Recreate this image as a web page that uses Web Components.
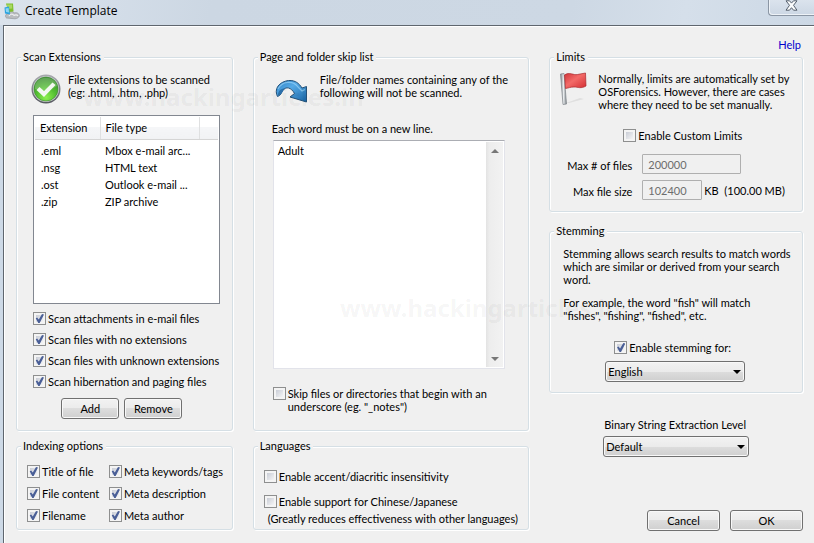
<!DOCTYPE html>
<html lang="en">
<head>
<meta charset="utf-8">
<title>Create Template</title>
<style>
  html { height: 100%; }
  body { margin: 0; min-height: 100%; display: flex; background: #f0f0f0; color: #000;
    font: 11px/13px Lato, "DejaVu Sans Condensed", sans-serif; }
  template-dialog { flex: 1; }
</style>
</head>
<body>
<template-dialog></template-dialog>

<script>
const define = (name, html, setup) => {
  const template = document.createElement('template');
  template.innerHTML = html;
  customElements.define(name, class extends HTMLElement {
    constructor() {
      super();
      this.attachShadow({ mode: 'open' }).append(template.content.cloneNode(true));
    }
    connectedCallback() { if (setup) setup(this, this.shadowRoot); }
  });
};

define('title-bar', `
<style>
  :host { display: flex; align-items: flex-start; height: 25px; box-sizing: border-box; padding-left: 3px;
    background: linear-gradient(100deg, #dbe3ec 0, #d3dde8 14%, #ccd7e3 26%, #cdd8e4 70%, #d5dfea 84%, #ccd8e5 100%); }
  svg { display: block; }
  .logo { margin-top: 3px; }
  h1 { flex: 1; margin: 0; padding: 3px 0 0 5px; font: 12px/16px "Open Sans", "Noto Sans", sans-serif; }
  button { width: 46px; height: 16px; padding: 0; display: grid; place-items: start center; box-sizing: border-box;
    border: 1px solid #8b96a4; border-top: 0; border-right: 0; border-radius: 0 0 0 4px;
    background: linear-gradient(#dbe3ed, #ccd7e4); box-shadow: inset 1px -1px #edf2f7; }
</style>
<svg class="logo" width="17" height="17" viewBox="0 0 17 17" aria-hidden="true">
  <path d="M3.500 15c-1.500-1-1.500-4 1.500-4.500 2-2.500 5-2.500 6-.5 3-1 5.500.5 5.300 3-.3 1.500-2.500 2.800-4.300 2.800z" fill="#b9bcbf" stroke="#8c9195" stroke-width=".6"/>
  <path d="M6 13c1-2 3.500-2.500 5-.5 1-.8 3-1 4 .3" fill="none" stroke="#eceeef" stroke-width="1.200"/>
  <path d="M3 .5h7l.5 8-5 .5z" fill="#7fbf2f"/><path d="M4 1.500h5l.3 4-4.800.5z" fill="#a9d862"/>
  <path d="M1.500 4.500l4.500-1 1 8-5-1z" fill="#2ba3df"/><path d="M2.500 5.500l3-.6.600 4.600-3-.6z" fill="#8ed6f5"/>
</svg>
<h1><slot></slot></h1>
<button type="button" aria-label="Close">
  <svg width="13" height="11" viewBox="0 0 13 11"><path d="M1 .8h3.500l2 2.300 2-2.300H12L8.500 5.300 12 10.200H8.500l-2-2.500-2 2.500H1l3.500-4.900z" fill="#fbfcfd" stroke="#555f6c"/></svg>
</button>`);

define('group-box', `
<style>
  :host { display: block; }
  fieldset { margin: 0; padding: 0; min-width: 0; height: 100%; box-sizing: border-box;
    border: 1px solid #d5dfe5; border-radius: 3px; box-shadow: 1px 1px #fff, inset 1px 1px #fff; }
  legend { margin-left: 4px; padding: 0 3px 0 2px; line-height: 14px; background: #f0f0f0; }
  .content { display: flex; flex-direction: column; padding: var(--pad, 0); }
</style>
<fieldset><legend></legend><div class="content"><slot></slot></div></fieldset>`,
(host, root) => { root.querySelector('legend').textContent = host.getAttribute('heading'); });

define('check-box', `
<style>
  :host { display: block; }
  label { display: flex; align-items: flex-start; gap: 2px; white-space: nowrap; }
  input { appearance: none; flex: none; margin: 0; width: 13px; height: 13px; box-sizing: border-box;
    border: 1px solid #8e8f8f; background: linear-gradient(135deg, #c9cdd6, #f4f4f5) content-box, #f4f4f4; padding: 2px; 
    display: grid; }
  input::before { content: ""; width: 9px; height: 9px; margin: -1px; }
  input:checked::before { background: #4a5f97;
    clip-path: polygon(8% 48%, 24% 38%, 42% 60%, 78% 0, 100% 6%, 52% 100%, 36% 100%); }
</style>
<label><input type="checkbox"><span><slot></slot></span></label>`,
(host, root) => { root.querySelector('input').checked = host.hasAttribute('checked'); });

define('push-button', `
<style>
  :host { display: block; width: 58px; }
  button { display: block; width: 100%; height: 21px; padding: 0; font: inherit; color: inherit; border: 1px solid #707070; border-radius: 3px;
    background: linear-gradient(#f2f2f2, #ebebeb 50%, #dddddd 50%, #cfcfcf); box-shadow: inset 0 0 0 1px #f8f8f8; }
</style>
<button type="button"><slot></slot></button>`);

define('drop-down', `
<style>
  :host { display: block; }
  label { display: block; line-height: 14px; margin-bottom: 4px; padding-left: 1px; white-space: nowrap; }
  label:empty { display: none; }
  .box { display: grid; align-items: center; }
  select, svg { grid-area: 1 / 1; }
  select { appearance: none; width: 100%; height: 21px; margin: 0; padding: 0 20px 0 2px; font: inherit; color: inherit;
    border: 1px solid #707070; border-radius: 3px; background: linear-gradient(#f2f2f2, #ebebeb 50%, #dddddd 50%, #cfcfcf); box-shadow: inset 0 0 0 1px #f8f8f8; }
  svg { justify-self: end; margin-right: 4px; pointer-events: none; }
</style>
<label for="choice"></label>
<div class="box"><select id="choice"></select>
<svg width="8" height="4" viewBox="0 0 8 4" aria-hidden="true"><path d="M0 0h8L4 4z"/></svg></div>`,
(host, root) => {
  const select = root.querySelector('select');
  root.querySelector('label').textContent = host.getAttribute('label') || '';
  select.replaceChildren(new Option(host.getAttribute('value')));
  if (!host.hasAttribute('label')) select.setAttribute('aria-label', host.getAttribute('name'));
});

define('limit-field', `
<style>
  :host { display: block; }
  div { display: grid; grid-template-columns: 74px 1fr; column-gap: 10px; align-items: center; white-space: nowrap; }
  label { text-align: right; padding-top: 3px; }
  span { display: flex; align-items: center; gap: 2px; }
  input { width: var(--field, 60px); height: 20px; box-sizing: border-box; margin: 0; padding: 0 5px; font: inherit; color: #6d6d6d;
    border: 1px solid #afafaf; border-radius: 1px; background: #f0f0f0; }
</style>
<div><label for="amount"></label><span><input id="amount" disabled><slot></slot></span></div>`,
(host, root) => {
  root.querySelector('label').textContent = host.getAttribute('label');
  root.querySelector('input').value = host.getAttribute('value');
});

define('word-list', `
<style>
  :host { display: block; }
  label { display: block; margin: 0 0 5px -1px; }
  .box { display: flex; height: 229px; box-sizing: border-box; background: #fff; border: 1px solid #e2e3ea; border-top-color: #abadb3; }
  textarea { flex: 1; min-width: 0; resize: none; margin: 0; padding: 3px 4px; overflow: hidden;
    font: inherit; color: inherit; background: none; border: 0; outline: 0; }
  .rail { width: 17px; margin: 1px; box-sizing: border-box; padding: 7px 0 6px; display: flex; flex-direction: column; justify-content: space-between; align-items: center;
    background: linear-gradient(90deg, #e3e3e3, #ededed 20%, #f2f2f2); }
  svg { display: block; }
</style>
<label for="words">Each word must be on a new line.</label>
<div class="box"><textarea id="words" spellcheck="false">Adult</textarea>
<div class="rail" aria-hidden="true">
  <svg width="8" height="4" viewBox="0 0 8 4"><path d="M0 4h8L4 0z" fill="#777"/></svg>
  <svg width="8" height="4" viewBox="0 0 8 4"><path d="M0 0h8L4 4z" fill="#777"/></svg>
</div></div>`);

define('extension-table', `
<style>
  :host { display: block; height: 189px; box-sizing: border-box; border: 1px solid #828790; background: #fff; padding: 1px; }
  table { width: 100%; border-collapse: collapse; table-layout: fixed; }
  th, td { padding: 0 0 0 5px; font-weight: normal; text-align: left; white-space: nowrap; }
  th { height: 22px; box-sizing: border-box; border-right: 1px solid #dfe0e1; border-bottom: 1px solid #d5d5d5;
    background: linear-gradient(#fff 45%, #f5f6f8 45%, #f1f2f4); }
  th:last-child { border-right: 0; }
  td { height: 17px; }
  td:first-child { padding-left: 6px; }
  tbody::before { content: ""; display: block; height: 2px; }
</style>
<table>
  <colgroup><col style="width:65px"><col><col style="width:18px"></colgroup>
  <thead><tr><th>Extension</th><th>File type</th><th></th></tr></thead>
  <tbody></tbody>
</table>`,
(host, root) => {
  const body = root.querySelector('tbody');
  for (const row of [['.eml', 'Mbox e-mail arc...'], ['.nsg', 'HTML text'], ['.ost', 'Outlook e-mail ...'], ['.zip', 'ZIP archive']]) {
    const tr = body.insertRow();
    for (const text of row) tr.insertCell().textContent = text;
  }
});

define('picture-note', `
<style>
  :host { display: flex; align-items: flex-start; }
  ::slotted(svg) { display: block; flex: none; }
  p { margin: 0; white-space: nowrap; }
</style>
<slot name="icon"></slot><p><slot></slot></p>`);

define('water-mark', `
<style>
  :host { position: absolute; pointer-events: none; white-space: nowrap; color: rgba(0, 0, 0, .055);
    font: bold 24px/28px "Noto Sans", "Open Sans", sans-serif; }
</style><slot></slot>`);

define('template-dialog', `
<style>
  :host { display: flex; flex-direction: column; position: relative; background: #cdd9e6; }
  main { flex: 1; display: flex; flex-direction: column; margin-left: 3px; padding: 12px 11px 12px 12px; border: solid #5f666e; border-width: 1px 0 0 1px;
    background: #f0f0f0; box-shadow: inset 1px 1px #fff; }
  nav { text-align: right; padding-right: 2px; height: 12px; }
  a { color: #00c; text-decoration: none; }
  .columns { flex: 1; display: grid; grid-template-columns: 217fr 277fr 254fr; gap: 20px; }
  .column { display: flex; flex-direction: column; min-width: 0; }
  .scan { --pad: 9px 12px 11px 16px; }
  .scan picture-note { gap: 6px; margin-left: -3px; height: 42px; }
  .checks { display: grid; gap: 8px; margin-top: 8px; }
  .buttons { display: flex; gap: 5px; justify-content: center; margin-top: 10px; }
  .scan .buttons { padding-right: 9px; }
  .index { --pad: 12px 6px 7px 10px; margin-top: 8px; }
  .pairs { display: grid; grid-template-columns: 82px auto; row-gap: 9px; justify-content: start; }
  .skip { --pad: 9px 23px 17px 19px; }
  .skip picture-note { gap: 11px; height: 49px; }
  .skip check-box { margin-top: 18px; }
  .lang { --pad: 17px 4px 4px 10px; margin-top: 8px; }
  .lang check-box + check-box { margin-top: 12px; }
  .lang p { margin: 4px 0 0 4px; white-space: nowrap; }
  .limits { --pad: 8px 4px 11px 8px; }
  .limits picture-note { gap: 8px; height: 57px; }
  .limits check-box { margin: 0 0 12px 65px; }
  .limits limit-field + limit-field { margin-top: 6px; }
  .wide { --field: 99px; }
  .stem { --pad: 9px 12px 10px 13px; margin-top: 12px; }
  .stem p { margin: 0 0 10px; white-space: nowrap; }
  .stem check-box { margin: 9px 0 7px 51px; }
  .stem drop-down { width: 140px; margin-left: 42px; }
  .level { width: 146px; margin: 25px 0 0 54px; }
  .actions { display: flex; gap: 10px; justify-content: flex-end; margin-top: auto; }
  .actions push-button { width: 73px; }
  .one { left: 83px; top: 83px; }
  .two { left: 340px; top: 294px; }
</style>
<title-bar>Create Template</title-bar>
<main>
  <nav><a href="#help">Help</a></nav>
  <div class="columns">
    <div class="column">
      <group-box class="scan" heading="Scan Extensions">
        <picture-note>
          <svg slot="icon" width="32" height="32" viewBox="0 0 32 32" aria-hidden="true">
            <defs><radialGradient id="g" cx=".5" cy=".85" r=".8"><stop offset="0" stop-color="#8df04e"/><stop offset=".5" stop-color="#55c033"/><stop offset="1" stop-color="#3b8f2e"/></radialGradient>
            <linearGradient id="r" x2="0" y2="1"><stop offset="0" stop-color="#a9abb0"/><stop offset="1" stop-color="#55585f"/></linearGradient></defs>
            <circle cx="16" cy="16" r="14.500" fill="url(#r)"/><circle cx="16" cy="16" r="13" fill="#c8cacc"/><circle cx="16" cy="16" r="12" fill="url(#g)" stroke="#39892f" stroke-width=".6"/>
            <path d="M5 13c2-11 20-11 22 0-6 4-15 5-22 3z" fill="#fff" opacity=".2"/>
            <path d="M6.500 17l3-3 4.500 4 8.500-8.500 3 2.500L14 24z" fill="#f4f8f1"/>
          </svg>
          File extensions to be scanned<br>(eg: .html, .htm, .php)
        </picture-note>
        <extension-table></extension-table>
        <div class="checks">
          <check-box checked>Scan attachments in e-mail files</check-box>
          <check-box checked>Scan files with no extensions</check-box>
          <check-box checked>Scan files with unknown extensions</check-box>
          <check-box checked>Scan hibernation and paging files</check-box>
        </div>
        <div class="buttons"><push-button>Add</push-button><push-button>Remove</push-button></div>
      </group-box>
      <group-box class="index" heading="Indexing options">
        <div class="pairs">
          <check-box checked>Title of file</check-box><check-box checked>Meta keywords/tags</check-box>
          <check-box checked>File content</check-box><check-box checked>Meta description</check-box>
          <check-box checked>Filename</check-box><check-box checked>Meta author</check-box>
        </div>
      </group-box>
    </div>
    <div class="column">
      <group-box class="skip" heading="Page and folder skip list">
        <picture-note>
          <svg slot="icon" width="36" height="32" viewBox="0 0 36 32" aria-hidden="true">
            <defs><linearGradient id="b" x2="1" y2="1"><stop offset="0" stop-color="#2a7fc4"/><stop offset=".4" stop-color="#56aae6"/><stop offset="1" stop-color="#1763a5"/></linearGradient></defs>
            <path d="M4.500 23.500C0 14 9 7.500 17 7.500c5 0 9 2.500 12 7.500l4.500-1.500V29L17 24l4.500-3.500C18 14 13 13.500 10 17c-2 3-2 5.500-5.500 6.500z" fill="url(#b)" stroke="#235179"/>
            <path d="M5 16c4-8 15-9 20-2l4 4 3-1.500" fill="none" stroke="#a6dcfb" stroke-width="1.200" opacity=".6"/>
            <path d="M5 22.500c0-5 3-7.500 8-7-4 1.500-3 6-8 7z" fill="#2b70ab"/>
          </svg>
          File/folder names containing any of the<br>following will not be scanned.
        </picture-note>
        <word-list></word-list>
        <check-box>Skip files or directories that begin with an<br>underscore (eg. "_notes")</check-box>
      </group-box>
      <group-box class="lang" heading="Languages">
        <check-box>Enable accent/diacritic insensitivity</check-box>
        <check-box>Enable support for Chinese/Japanese</check-box>
        <p>(Greatly reduces effectiveness with other languages)</p>
      </group-box>
    </div>
    <div class="column">
      <group-box class="limits" heading="Limits">
        <picture-note>
          <svg slot="icon" width="32" height="36" viewBox="0 0 32 36" aria-hidden="true">
            <defs><linearGradient id="f" x2="1" y2="1"><stop offset="0" stop-color="#cf3438"/><stop offset=".45" stop-color="#f36a68"/><stop offset="1" stop-color="#d22c31"/></linearGradient>
            <linearGradient id="p"><stop offset="0" stop-color="#7f858a"/><stop offset=".5" stop-color="#e8ebed"/><stop offset="1" stop-color="#7b8287"/></linearGradient></defs>
            <path d="M8 31l14-5 4 1-15 4z" fill="#000" opacity=".07"/>
            <path d="M2.500 2l3.500-.5L8.500 32l-3.500.5z" fill="url(#p)" stroke="#7c8388" stroke-width=".7"/>
            <path d="M6.500 3c5-3.500 9 .5 13-.5l8-1.500.5 13c-5 3-8 1-12 1-4 0-5 1-8.500 1.500z" fill="url(#f)" stroke="#a8282c" stroke-width=".7"/>
          </svg>
          Normally, limits are automatically set by<br>OSForensics. However, there are cases<br>where they need to be set manually.
        </picture-note>
        <check-box>Enable Custom Limits</check-box>
        <limit-field class="wide" label="Max # of files" value="200000"></limit-field>
        <limit-field label="Max file size" value="102400">KB &nbsp;(100.00 MB)</limit-field>
      </group-box>
      <group-box class="stem" heading="Stemming">
        <p>Stemming allows search results to match words<br>which are similar or derived from your search<br>word.</p>
        <p>For example, the word "fish" will match<br>"fishes", "fishing", "fished", etc.</p>
        <check-box checked>Enable stemming for:</check-box>
        <drop-down name="Stemming language" value="English"></drop-down>
      </group-box>
      <drop-down class="level" label="Binary String Extraction Level" value="Default"></drop-down>
      <div class="actions"><push-button>Cancel</push-button><push-button>OK</push-button></div>
    </div>
  </div>
</main>
<water-mark class="one">www.hackingarticles.in</water-mark>
<water-mark class="two">www.hackingarticles.in</water-mark>`);
</script>
</body>
</html>
